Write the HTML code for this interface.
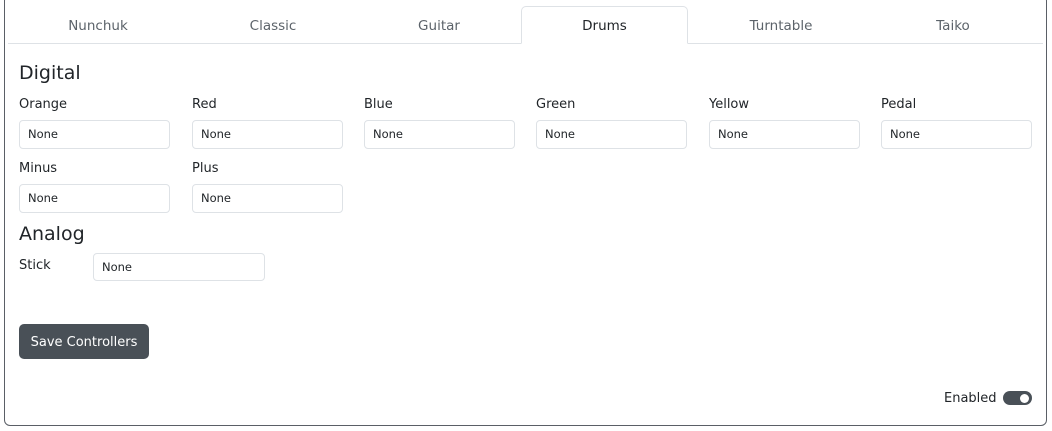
<!DOCTYPE html>
<html><head><style>
*{box-sizing:border-box;margin:0;padding:0}
body{width:1052px;height:431px;background:#fff;font-family:"DejaVu Sans","Liberation Sans",sans-serif;color:#212529;position:relative;overflow:hidden}
.card{position:absolute;left:4px;top:-5px;width:1043px;height:431px;border:1px solid #5a5f66;border-radius:6px}
.tabs{position:absolute;left:8px;top:6px;width:1035px;height:38px;border-bottom:1px solid #dee2e6}
.tab{position:absolute;top:0;height:38px;line-height:40px;text-align:center;font-size:13.5px;color:#5c636a}
.tab.active{border:1px solid #dee2e6;border-bottom:1px solid #fff;border-radius:5px 5px 0 0;color:#212529;background:#fff;height:38px;line-height:38px}
h2{position:absolute;font-size:19px;font-weight:400}
.lbl{position:absolute;font-size:13px}
.inp{position:absolute;width:151px;height:29px;border:1px solid #dee2e6;border-radius:4px;font-size:11.5px;padding-left:8px;line-height:26px}
.btn{position:absolute;left:19px;top:324px;width:130px;height:35px;background:#495057;color:#fff;border-radius:5px;font-size:13px;line-height:38px;text-align:center}
.en{position:absolute;left:944px;top:391px;font-size:13px}
.tg{position:absolute;left:1003px;top:391px;width:29px;height:14px;background:#495057;border-radius:7px}
.tg:after{content:"";position:absolute;right:3px;top:2.5px;width:9px;height:9px;border-radius:50%;background:#fff}
</style></head><body>
<div class="card"></div>
<div class="tabs">
<div class="tab" style="left:0;width:180px">Nunchuk</div>
<div class="tab" style="left:180px;width:170px">Classic</div>
<div class="tab" style="left:345px;width:172px">Guitar</div>
<div class="tab active" style="left:513px;width:167px">Drums</div>
<div class="tab" style="left:687px;width:172px">Turntable</div>
<div class="tab" style="left:859px;width:172px">Taiko</div>
</div>
<h2 style="left:19px;top:62px">Digital</h2>
<div class="lbl" style="left:19px;top:97px">Orange</div>
<div class="lbl" style="left:192px;top:97px">Red</div>
<div class="lbl" style="left:364px;top:97px">Blue</div>
<div class="lbl" style="left:536px;top:97px">Green</div>
<div class="lbl" style="left:709px;top:97px">Yellow</div>
<div class="lbl" style="left:881px;top:97px">Pedal</div>
<div class="inp" style="left:19px;top:120px">None</div>
<div class="inp" style="left:192px;top:120px">None</div>
<div class="inp" style="left:364px;top:120px">None</div>
<div class="inp" style="left:536px;top:120px">None</div>
<div class="inp" style="left:709px;top:120px">None</div>
<div class="inp" style="left:881px;top:120px">None</div>
<div class="lbl" style="left:19px;top:161px">Minus</div>
<div class="lbl" style="left:192px;top:161px">Plus</div>
<div class="inp" style="left:19px;top:184px">None</div>
<div class="inp" style="left:192px;top:184px">None</div>
<h2 style="left:19px;top:223px">Analog</h2>
<div class="lbl" style="left:19px;top:258px">Stick</div>
<div class="inp" style="left:93px;top:253px;width:172px;height:28px">None</div>
<div class="btn">Save Controllers</div>
<div class="en">Enabled</div>
<div class="tg"></div>
</body></html>
